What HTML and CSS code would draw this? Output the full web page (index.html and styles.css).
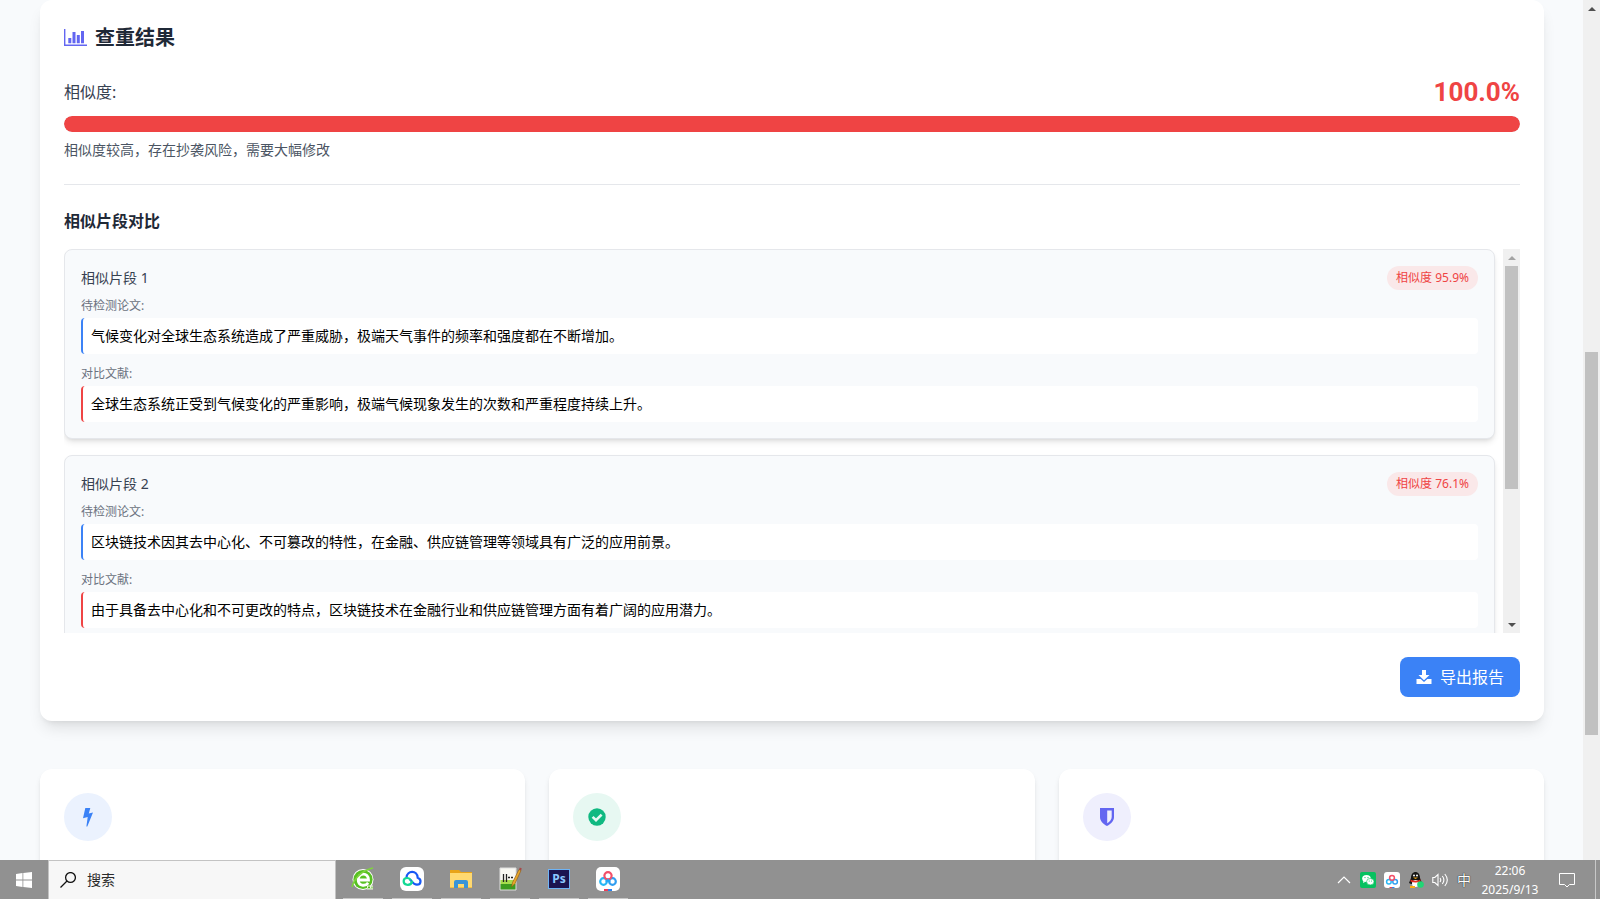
FILE: index.html
```html
<!DOCTYPE html>
<html lang="zh-CN">
<head>
  <meta charset="UTF-8">
  <meta name="viewport" content="width=device-width, initial-scale=1.0">
  <title>论文查重</title>
  <link rel="stylesheet" href="styles.css">
</head>
<body>
  <div class="viewport">
    <main class="page">
      <section class="card result">
        <h2 class="result-title">
          <svg class="icon-chart" viewBox="0 0 23 20" aria-hidden="true"><path d="M0 1h1.4v15.6H23V18H0z"/><path d="M4.300 10h3v5.200h-3zM8.500 4h3v11.200h-3zM12.800 7h3v8.200h-3zM17 3h3v12.200h-3z"/></svg>
          查重结果
        </h2>

        <div class="score-row">
          <span class="score-label">相似度:</span>
          <span class="score-value">100.0%</span>
        </div>
        <div class="progress"><div class="progress-bar" style="width: 100%"></div></div>
        <p class="score-note">相似度较高，存在抄袭风险，需要大幅修改</p>

        <div class="segments">
          <h3>相似片段对比</h3>
          <div class="segment-view">
            <div class="segment-list">
              <article class="segment">
                <div class="segment-head">
                  <span class="segment-name">相似片段 1</span>
                  <span class="badge">相似度 95.9%</span>
                </div>
                <p class="source">待检测论文:</p>
                <p class="quote quote-blue">气候变化对全球生态系统造成了严重威胁，极端天气事件的频率和强度都在不断增加。</p>
                <p class="source">对比文献:</p>
                <p class="quote quote-red">全球生态系统正受到气候变化的严重影响，极端气候现象发生的次数和严重程度持续上升。</p>
              </article>
              <article class="segment">
                <div class="segment-head">
                  <span class="segment-name">相似片段 2</span>
                  <span class="badge">相似度 76.1%</span>
                </div>
                <p class="source">待检测论文:</p>
                <p class="quote quote-blue">区块链技术因其去中心化、不可篡改的特性，在金融、供应链管理等领域具有广泛的应用前景。</p>
                <p class="source">对比文献:</p>
                <p class="quote quote-red">由于具备去中心化和不可更改的特点，区块链技术在金融行业和供应链管理方面有着广阔的应用潜力。</p>
              </article>
            </div>
            <div class="scrollbar">
              <i class="arrow arrow-up arrow-off"></i>
              <i class="thumb thumb-list"></i>
              <i class="arrow arrow-down"></i>
            </div>
          </div>
        </div>

        <div class="actions">
          <button type="button" class="btn-export">
            <svg viewBox="0 0 16 16" aria-hidden="true"><path d="M6 1h4v5h3.500L8 11.300 2.500 6H6z"/><path d="M.5 10h4.200L8 13l3.300-3h4.200v5H.5z"/></svg>
            导出报告
          </button>
        </div>
      </section>

      <section class="features">
        <div class="card feature">
          <div class="feature-icon blue">
            <svg viewBox="0 0 20 20" aria-hidden="true"><path d="M7.300 1h5L10.800 6.400l4.200-1L9.300 19.500H8.400L9.700 10 5 11.300z"/></svg>
          </div>
        </div>
        <div class="card feature">
          <div class="feature-icon green">
            <svg viewBox="0 0 20 20" aria-hidden="true"><circle cx="10" cy="10" r="8.700"/><path class="tick" d="M5.600 9.800l3.400 3.400 5.600-5.600"/></svg>
          </div>
        </div>
        <div class="card feature">
          <div class="feature-icon indigo">
            <svg viewBox="0 0 20 20" aria-hidden="true"><path fill-rule="evenodd" d="M3 1h14v9c0 4-3 6.800-7 9-4-2.200-7-5-7-9zM10.200 3.400v12.800c2.600-1.600 4.500-3.600 4.500-6.200V3.400z"/></svg>
          </div>
        </div>
      </section>
    </main>
    <div class="scrollbar">
      <i class="arrow arrow-up"></i>
      <i class="thumb thumb-page"></i>
    </div>
  </div>

  <footer class="taskbar">
    <button type="button" class="start" aria-label="开始">
      <svg viewBox="0 0 16 16"><path d="M0 2l6.500-.9v6.500H0zM7.300 1L16 0v7.600H7.300zM0 8.400h6.500v6.500L0 14zM7.300 8.400H16V16l-8.700-1z"/></svg>
    </button>
    <label class="search">
      <svg viewBox="0 0 16 16"><circle cx="10.500" cy="5.500" r="4.900"/><path d="M7 9L.5 15.500"/></svg>
      <input type="text" placeholder="搜索" aria-label="搜索">
    </label>
    <nav class="apps">
      <button type="button" aria-label="浏览器">
        <svg viewBox="0 0 24 24"><circle cx="12" cy="12.500" r="10.500" fill="#fff"/><circle cx="12" cy="12.500" r="9.600" fill="#58c022"/><path d="M7 13h10.500c0-8-10.300-7.800-10.300 0 0 6 7 6.700 10 2.800" fill="none" stroke="#fff" stroke-width="2.800"/><path d="M1 20C3 11 12 3 22 1" fill="none" stroke="#7ed33e" stroke-width="1.600"/><path d="M16 18.500h6v4h-6z" fill="#eaf7dd"/><path d="M17 21.500l1-2 1 2M21 19.500v2" fill="none" stroke="#58b526"/></svg>
      </button>
      <button type="button" aria-label="云盘">
        <svg viewBox="0 0 24 24"><rect width="24" height="24" rx="6" fill="#fff"/><path d="M6.500 10.500c.6-7.500 10.800-7.500 11.200.2 4.300 1.600 3.300 7-.7 7-3.500 0-5-3.200-6.700-5" fill="none" stroke="#1758f5" stroke-width="2.200" stroke-linecap="round"/><path d="M12 14.500c-.5 3-3 3.500-5.300 3.200-4.200-.8-4-6.700.3-6.700 1.600 0 2.600.7 3.300 1.700" fill="none" stroke="#11d994" stroke-width="2.200" stroke-linecap="round"/></svg>
      </button>
      <button type="button" aria-label="文件资源管理器">
        <svg viewBox="0 0 24 24"><path d="M1 3h9l2 2h11v16H1z" fill="#e8a317"/><path d="M1 6h22v14.500H1z" fill="#ffd970"/><path d="M5 21v-6q0-2 2-2h10q2 0 2 2v6h-4v-4H9v4z" fill="#3994d8"/></svg>
      </button>
      <button type="button" aria-label="编辑器">
        <svg viewBox="0 0 24 24"><path d="M2 1h16v22H2z" fill="#f8f8f2"/><path d="M2 13h16v5H2z" fill="#a5dc4c"/><path d="M2 17h16v6H2z" fill="#3c9b1e"/><path d="M2 1h16v22H2z" fill="none" stroke="#ddd"/><path d="M5.500 7v8M8.500 7v8M10 10.500h2M13 10.500h2" stroke="#222" stroke-width="1.300"/><path d="M13.500 20l1-4.500L21 2.500l2 1L17 16.500z" fill="#e8a628" stroke="#8d5b13" stroke-width=".6"/><path d="M21 2.500l.8-2 2 1-.8 2z" fill="#a84848"/></svg>
      </button>
      <button type="button" aria-label="图像处理">
        <span class="ps">Ps</span>
      </button>
      <button type="button" aria-label="网盘">
        <svg viewBox="0 0 24 24"><rect width="24" height="24" rx="5" fill="#fff"/><g fill="none" stroke-width="2.200"><circle cx="7.500" cy="14.500" r="3.300" stroke="#27b7f5"/><circle cx="16.500" cy="14.500" r="3.300" stroke="#2f9df0"/><circle cx="12" cy="8.700" r="3.600" stroke="#f24f68"/></g><path d="M10 15l2-2 2 2" fill="none" stroke="#27a7f5" stroke-width="2"/><path d="M8 22h4v2H8z" fill="#ef3e57"/><path d="M12 22h4v2h-4z" fill="#2682f0"/></svg>
      </button>
    </nav>
    <div class="tray">
      <svg viewBox="0 0 16 16"><path d="M2 11l6-6 6 6" fill="none" stroke="#fff" stroke-width="1.200"/></svg>
      <svg viewBox="0 0 16 16"><rect width="16" height="16" rx="2" fill="#07c160"/><ellipse cx="6.500" cy="6.500" rx="4.300" ry="3.600" fill="#fff"/><path d="M3.500 9l-.5 2 2.500-1.200z" fill="#fff"/><ellipse cx="10.300" cy="9.700" rx="3.700" ry="3.200" fill="#fff" stroke="#07c160" stroke-width=".6"/><g fill="#07c160"><circle cx="5" cy="5.600" r=".6"/><circle cx="8" cy="5.600" r=".6"/><circle cx="9.200" cy="9" r=".5"/><circle cx="11.500" cy="9" r=".5"/></g></svg>
      <svg viewBox="0 0 16 16"><rect width="16" height="16" rx="3" fill="#fff"/><g fill="none" stroke-width="1.500"><circle cx="4.900" cy="9.700" r="2.300" stroke="#27b7f5"/><circle cx="11.100" cy="9.700" r="2.300" stroke="#2f9df0"/><circle cx="8" cy="5.800" r="2.400" stroke="#f24f68"/></g><path d="M5.500 15H8v1H5.500z" fill="#ef3e57"/><path d="M8 15h2.500v1H8z" fill="#2682f0"/></svg>
      <svg viewBox="0 0 16 16"><path d="M3 6c0-8 9-8 9 0l2 5-2 1H3l-2-1z" fill="#151515"/><ellipse cx="7.500" cy="11.500" rx="3.500" ry="3.500" fill="#fff"/><path d="M2.500 7.500q5 2.500 10 0v2q-5 2-10 0z" fill="#e52b20"/><path d="M5 5.500h5L7.500 7zM2 14h5v2H2z" fill="#f9ad16"/><circle cx="6" cy="3.500" r="1" fill="#fff"/><circle cx="9" cy="3.500" r="1" fill="#fff"/><circle cx="12.500" cy="12.500" r="3.300" fill="#21d675"/></svg>
      <svg viewBox="0 0 16 16"><path d="M.8 5.500h2L6 2.500v11L2.800 10.500h-2zM8 6q1.500 2 0 4M10.300 4q3.200 4 0 8M12.800 2q5 6 0 12" fill="none" stroke="#fff" stroke-width="1.100"/></svg>
      <span class="ime">中</span>
    </div>
    <div class="clock"><time>22:06</time><time>2025/9/13</time></div>
    <button type="button" class="notice" aria-label="通知">
      <svg viewBox="0 0 16 16"><path d="M.5 1.500h15v11h-5L8 15l-2.500-2.500h-5z" fill="none" stroke="#fff"/></svg>
    </button>
    <button type="button" class="show-desktop" aria-label="显示桌面"></button>
  </footer>
</body>
</html>
```

FILE: styles.css
```css
* {
  box-sizing: border-box;
}
body {
  margin: 0;
  height: 100vh;
  display: flex;
  flex-direction: column;
  overflow: hidden;
  background: #f8fafc;
  color: #000;
  font-family: "Noto Sans", "Noto Sans CJK SC", sans-serif;
  font-size: 16px;
  line-height: 24px;
}
h2, h3, p {
  margin: 0;
}
button, input {
  font: inherit;
  border: 0;
  padding: 0;
  background: none;
}
svg {
  display: block;
  flex-shrink: 0;
}

/* page */
.viewport {
  flex: 1;
  min-height: 0;
  display: flex;
  overflow: hidden;
}
.page {
  flex: 1;
  min-width: 0;
  padding: 0 39px 0 40px;
}
.card {
  background: #fff;
  border-radius: 12px;
  padding: 24px;
}
.result {
  box-shadow: 0 10px 15px -3px rgba(0, 0, 0, 0.1), 0 4px 6px -4px rgba(0, 0, 0, 0.1);
}
.result-title {
  display: flex;
  align-items: center;
  gap: 8px;
  margin-bottom: 24px;
  font-size: 20px;
  line-height: 28px;
  font-weight: 700;
  color: #1f2937;
}
.icon-chart {
  width: 23px;
  height: 20px;
  fill: #6366f1;
}
.score-row {
  display: flex;
  justify-content: space-between;
  align-items: center;
  margin-bottom: 8px;
}
.score-label {
  color: #374151;
}
.score-value {
  font-family: Roboto, sans-serif;
  font-size: 26px;
  line-height: 32px;
  font-weight: 700;
  color: #ef4444;
}
.progress {
  height: 16px;
  border-radius: 8px;
  background: #e5e7eb;
  overflow: hidden;
}
.progress-bar {
  height: 100%;
  border-radius: 8px;
  background: #ef4444;
}
.score-note {
  margin-top: 8px;
  font-size: 14px;
  line-height: 20px;
  color: #4b5563;
}

/* similar segments */
.segments {
  margin-top: 24px;
  padding-top: 24px;
  border-top: 1px solid #e5e7eb;
}
.segments h3 {
  margin-bottom: 16px;
  font-size: 16px;
  font-weight: 700;
  color: #1f2937;
}
.segment-view {
  display: flex;
  height: 384px;
}
.segment-list {
  flex: 1;
  min-width: 0;
  display: flex;
  flex-direction: column;
  gap: 16px;
  padding-right: 8px;
  overflow: hidden;
}
.segment {
  flex-shrink: 0;
  padding: 16px;
  border: 1px solid #e5e7eb;
  border-radius: 8px;
  background: #f8fafc;
  box-shadow: 0 4px 6px -1px rgba(0, 0, 0, 0.1), 0 2px 4px -2px rgba(0, 0, 0, 0.1);
}
.segment-head {
  display: flex;
  justify-content: space-between;
  align-items: center;
  margin-bottom: 8px;
}
.segment-name {
  font-size: 14px;
  line-height: 20px;
  color: #374151;
}
.badge {
  padding: 4px 9px;
  border-radius: 12px;
  background: #fae8e9;
  font-size: 12px;
  line-height: 16px;
  color: #ef4444;
}
.source {
  margin-bottom: 4px;
  font-size: 12px;
  line-height: 16px;
  color: #6b7280;
}
.quote {
  padding: 8px;
  border-left: 2px solid;
  border-radius: 4px;
  background: #fff;
  font-size: 14px;
  line-height: 20px;
}
.quote + .source {
  margin-top: 12px;
}
.quote-blue {
  border-color: #3b82f6;
}
.quote-red {
  border-color: #ef4444;
}

.actions {
  display: flex;
  justify-content: flex-end;
  margin-top: 24px;
}
.btn-export {
  display: flex;
  align-items: center;
  gap: 8px;
  padding: 8px 16px;
  border-radius: 8px;
  background: #3b82f6;
  color: #fff;
}
.btn-export svg {
  width: 16px;
  height: 16px;
  fill: #fff;
}

/* scrollbars */
.scrollbar {
  width: 17px;
  flex-shrink: 0;
  display: flex;
  flex-direction: column;
  align-items: center;
  background: #f0f0f0;
}
.arrow {
  width: 17px;
  height: 17px;
  display: flex;
  align-items: center;
  justify-content: center;
}
.arrow::before {
  content: "";
  border: 4px solid transparent;
}
.arrow-up::before {
  border-top: 0;
  border-bottom-color: #505050;
}
.arrow-off::before {
  border-bottom-color: #a3a3a3;
}
.arrow-down {
  margin-top: auto;
}
.arrow-down::before {
  border-bottom: 0;
  border-top-color: #505050;
}
.thumb {
  width: 13px;
  background: #c1c1c1;
}
.thumb-list {
  height: 223px;
}
.thumb-page {
  height: 383px;
  margin-top: 335px;
}

/* features */
.features {
  display: grid;
  grid-template-columns: repeat(3, 1fr);
  gap: 24px;
  margin-top: 48px;
}
.feature {
  min-height: 190px;
  box-shadow: 0 4px 6px -1px rgba(0, 0, 0, 0.1), 0 2px 4px -2px rgba(0, 0, 0, 0.1);
}
.feature-icon {
  width: 48px;
  height: 48px;
  display: flex;
  align-items: center;
  justify-content: center;
  border-radius: 50%;
}
.feature-icon svg {
  width: 20px;
  height: 20px;
  fill: currentColor;
}
.blue {
  background: #ebf2fe;
  color: #3b82f6;
}
.green {
  background: #e7f8f2;
  color: #10b981;
}
.indigo {
  background: #efeffd;
  color: #6366f1;
}
.feature-icon .tick {
  fill: none;
  stroke: #e7f8f2;
  stroke-width: 2.6;
}

/* taskbar */
.taskbar {
  height: 39px;
  flex-shrink: 0;
  display: flex;
  background: #919191;
  color: #fff;
}
.start {
  width: 48px;
  display: flex;
  align-items: center;
  justify-content: center;
}
.start svg {
  width: 16px;
  height: 16px;
  fill: #fff;
}
.search {
  width: 288px;
  display: flex;
  align-items: center;
  gap: 11px;
  padding: 0 11px;
  border: 1px solid #c3c3c3;
  border-bottom: 0;
  background: #f7f7f7;
}
.search svg {
  width: 16px;
  height: 16px;
  fill: none;
  stroke: #111;
  stroke-width: 1.3;
}
.search input {
  flex: 1;
  min-width: 0;
  font-size: 14px;
  line-height: 20px;
  outline: 0;
}
.search input::placeholder {
  color: #2b2b2b;
  opacity: 1;
}
.apps {
  display: flex;
  gap: 9px;
  margin-left: 7px;
}
.apps button {
  width: 40px;
  display: flex;
  align-items: center;
  justify-content: center;
  border-bottom: 1px solid #c8c8c8;
}
.apps svg {
  width: 24px;
  height: 24px;
}
.ps {
  width: 22px;
  height: 20px;
  border: 1px solid #6fb4f5;
  background: #1b1450;
  color: #8cc8ff;
  font-size: 12px;
  line-height: 18px;
  font-weight: 700;
}
.tray {
  display: flex;
  align-items: center;
  gap: 8px;
  margin-left: auto;
}
.tray svg {
  width: 16px;
  height: 16px;
}
.ime {
  width: 16px;
  font-size: 14px;
  line-height: 16px;
  text-align: center;
  text-shadow: 0 0 1px #222, 0 0 1px #222;
}
.clock {
  width: 76px;
  display: flex;
  flex-direction: column;
  justify-content: center;
  text-align: center;
  font-size: 12px;
  line-height: 19px;
}
.notice {
  width: 38px;
  display: flex;
  align-items: center;
  justify-content: center;
}
.notice svg {
  width: 16px;
  height: 16px;
}
.show-desktop {
  width: 5px;
  margin-left: 9px;
  border-left: 1px solid #c8c8c8;
}
```
